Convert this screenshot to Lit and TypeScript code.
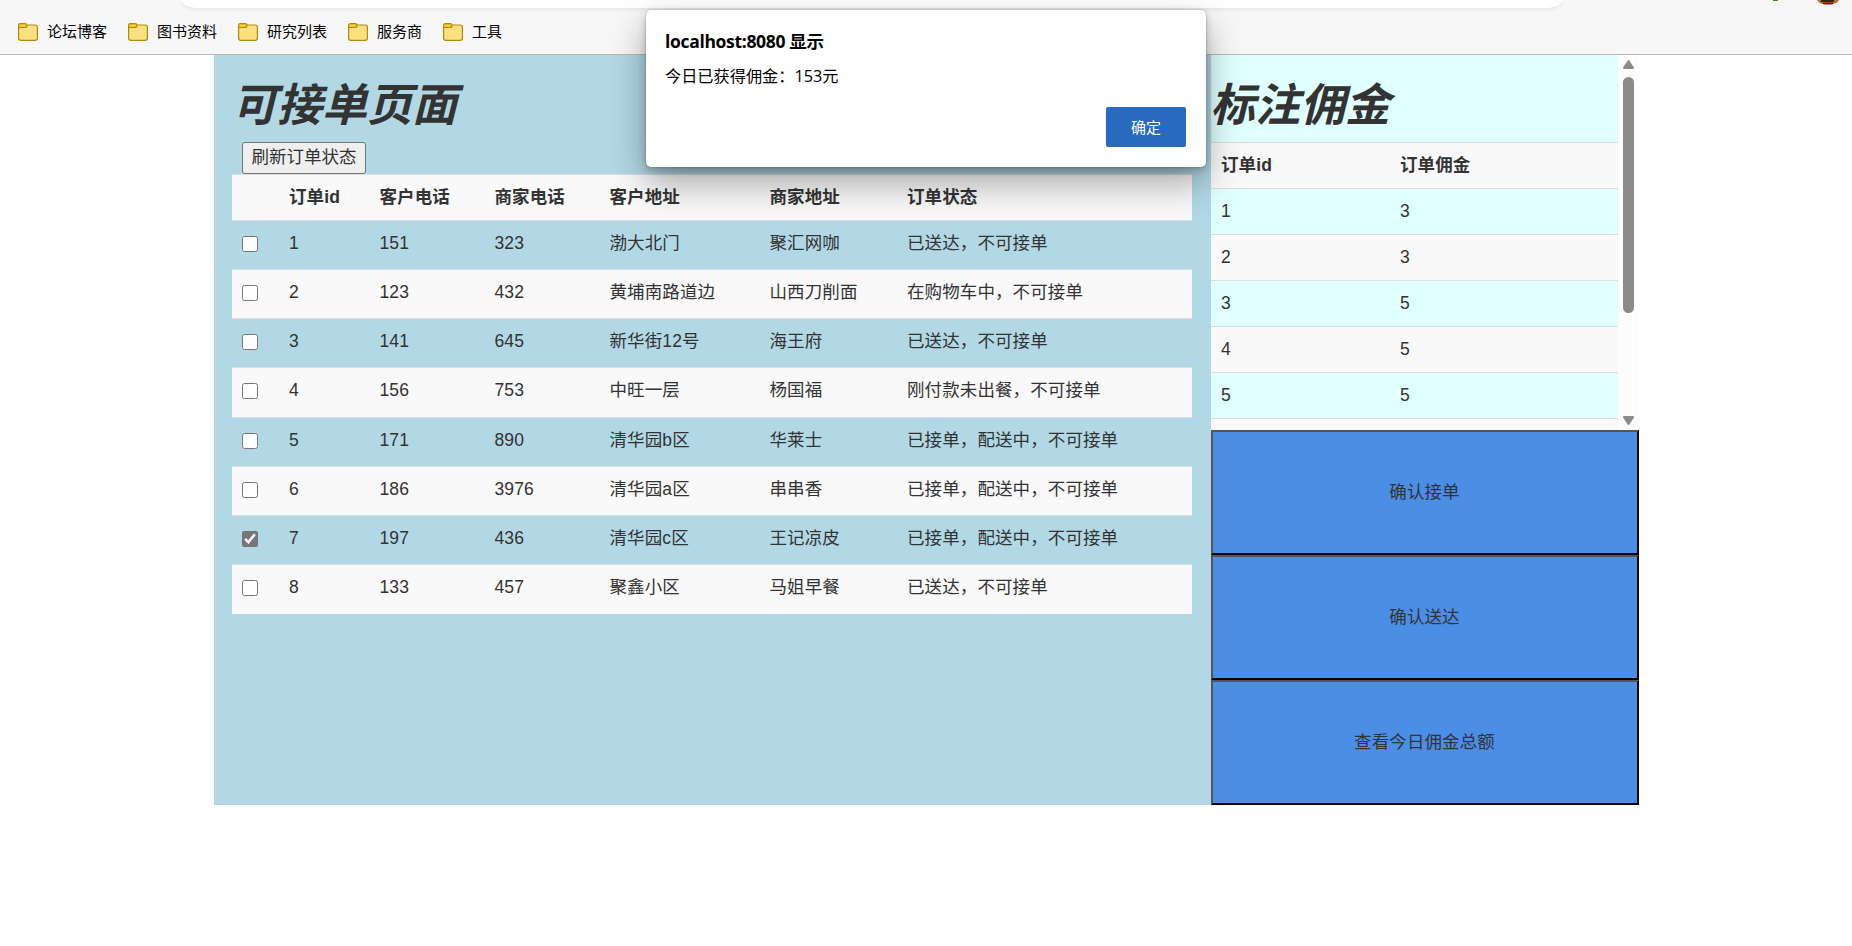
import { LitElement, html, css } from "lit";
import { customElement, property, state } from "lit/decorators.js";

interface Order {
  id: number;
  customer: string;
  shop: string;
  address: string;
  shopAddress: string;
  status: string;
}

const BOOKMARKS = ["论坛博客", "图书资料", "研究列表", "服务商", "工具"];

const ORDERS: Order[] = [
  { id: 1, customer: "151", shop: "323", address: "渤大北门", shopAddress: "聚汇网咖", status: "已送达，不可接单" },
  { id: 2, customer: "123", shop: "432", address: "黄埔南路道边", shopAddress: "山西刀削面", status: "在购物车中，不可接单" },
  { id: 3, customer: "141", shop: "645", address: "新华街12号", shopAddress: "海王府", status: "已送达，不可接单" },
  { id: 4, customer: "156", shop: "753", address: "中旺一层", shopAddress: "杨国福", status: "刚付款未出餐，不可接单" },
  { id: 5, customer: "171", shop: "890", address: "清华园b区", shopAddress: "华莱士", status: "已接单，配送中，不可接单" },
  { id: 6, customer: "186", shop: "3976", address: "清华园a区", shopAddress: "串串香", status: "已接单，配送中，不可接单" },
  { id: 7, customer: "197", shop: "436", address: "清华园c区", shopAddress: "王记凉皮", status: "已接单，配送中，不可接单" },
  { id: 8, customer: "133", shop: "457", address: "聚鑫小区", shopAddress: "马姐早餐", status: "已送达，不可接单" },
];

const FEES = [[1, 3], [2, 3], [3, 5], [4, 5], [5, 5]];

@customElement("browser-bar")
class BrowserBar extends LitElement {
  static styles = css`
    :host { display: block; }
    .bar {
      height: 54px; background: #f7f7f7; border-bottom: 1px solid #b9b9b9;
      display: flex; flex-direction: column; overflow: hidden;
      font-family: "Noto Sans CJK SC", sans-serif; font-size: 15px; color: #000;
    }
    .top { height: 16px; display: flex; flex: none; align-items: flex-start; }
    .address {
      margin-left: 182px; width: 1380px; height: 8px; background: #fff;
      border-radius: 0 0 16px 16px / 0 0 8px 8px; box-shadow: 0 1px 4px rgba(0,0,0,.09);
    }
    .dot { width: 5px; height: 1px; background: #3f8a1f; margin-left: 211px; }
    .avatar { margin-left: 38px; display: block; }
    .marks { display: flex; gap: 20px; padding-left: 18px; height: 32px; align-items: center; }
    .mark { display: flex; align-items: center; gap: 9px; line-height: 20px; white-space: nowrap; }
    .label { padding: 0 1px 2px 0; }
    .folder { display: block; width: 20px; height: 18px; }
  `;
  render() {
    return html`<div class="bar">
      <div class="top">
        <div class="address"></div>
        <div class="dot"></div>
        <svg class="avatar" width="24" height="6" viewBox="0 0 24 6">
          <path d="M1 0C4 6.300 20 6.300 23 0Z" fill="#b0762f" />
          <path d="M5 0h13v2H5Z" fill="#3a2410" />
          <path d="M7 2.500h10v1.600H7Z" fill="#8c0d0d" />
        </svg>
      </div>
      <div class="marks">
        ${BOOKMARKS.map((name) => html`<div class="mark">
          <svg class="folder" viewBox="0 0 20 18">
            <rect x=".6" y="2" width="18.800" height="15.300" rx="2.300" fill="#fbe07f" stroke="#b08a10" stroke-width="1.200" />
            <path d="M.6 4.400V2.400Q.6.6 2.400.6H7Q9 .6 9 2.200 9 4.500 6.600 4.500Z" fill="#f7cd2e" stroke="#b08a10" stroke-width="1.200" />
          </svg><span class="label">${name}</span>
        </div>`)}
      </div>
    </div>`;
  }
}

@customElement("order-panel")
class OrderPanel extends LitElement {
  @property({ attribute: false }) orders: Order[] = [];
  @property({ type: Number }) selected = 0;
  static styles = css`
    :host { display: block; width: 997px; height: 750px; background: #b2d8e6; }
    .panel { padding: 0 19px 0 18px; }
    .title { margin: 0; padding: 26px 0 0; height: 61px; line-height: 50px; font-size: 45px; font-weight: 700; font-style: italic; }
    .refresh {
      display: block; margin: 0 0 0 10px; width: 124px; height: 32px; padding: 0 0 3px; font: inherit; color: inherit;
      line-height: 26px; background: #efefef; border: 1px solid #767676; border-radius: 3px;
    }
    .grid { width: 960px; border-collapse: separate; border-spacing: 0; table-layout: fixed; letter-spacing: .1px; }
    th, td { padding: 10px 0 0 10px; border-top: 1px solid #ddd; line-height: 25px; text-align: left; vertical-align: top; white-space: nowrap; box-sizing: border-box; }
    th { height: 46px; }
    td { height: 49px; }
    .tall td { height: 50px; }
    .odd { background: #f9f9f9; }
    .c0 { width: 47px; } .c1 { width: 90.5px; } .c2, .c3 { width: 115px; }
    .c4 { width: 160px; } .c5 { width: 137.5px; }
    .check { display: block; width: 16px; height: 16px; margin: 5px 0 0; accent-color: #767676; }
  `;
  render() {
    return html`<div class="panel">
      <h1 class="title">可接单页面</h1>
      <button class="refresh">刷新订单状态</button>
      <table class="grid">
        <tr class="odd">
          <th class="c0"></th><th class="c1">订单id</th><th class="c2">客户电话</th><th class="c3">商家电话</th>
          <th class="c4">客户地址</th><th class="c5">商家地址</th><th>订单状态</th>
        </tr>
        ${this.orders.map((o, i) => html`<tr class="${i % 2 ? "odd" : "even"} ${i % 4 === 3 ? "tall" : ""}">
          <td><input class="check" type="checkbox" .checked=${o.id === this.selected} /></td>
          <td>${o.id}</td><td>${o.customer}</td><td>${o.shop}</td>
          <td>${o.address}</td><td>${o.shopAddress}</td><td>${o.status}</td>
        </tr>`)}
      </table>
    </div>`;
  }
}

@customElement("fee-panel")
class FeePanel extends LitElement {
  @property({ attribute: false }) fees: number[][] = [];
  static styles = css`
    :host { display: block; width: 428px; }
    .list { display: flex; height: 375px; overflow: hidden; }
    .content { width: 407px; background: #e0ffff; }
    .title { margin: 0; padding: 26px 0 0; height: 61px; line-height: 50px; font-size: 45px; font-weight: 700; font-style: italic; }
    .name { margin-left: -1px; }
    .row { display: grid; grid-template-columns: 179px 1fr; height: 25px; line-height: 25px; padding: 10px; border-top: 1px solid #ddd; }
    .odd { background: #f9f9f9; }
    .head { font-weight: 700; letter-spacing: .1px; }
    .scroll { width: 21px; background: #fcfcfc; display: flex; flex-direction: column; align-items: center; padding: 5px 0; box-sizing: border-box; }
    .arrow { display: block; width: 11px; height: 9px; flex: none; }
    .thumb { width: 11px; height: 236px; margin-top: 8px; margin-bottom: auto; border-radius: 6px; background: #8b8b8b; }
    .action {
      display: block; width: 428px; height: 125px; box-sizing: border-box; font: inherit; color: inherit; letter-spacing: .1px;
      padding: 0 1px 1px 0; background: #4b8ee6; border: 2px solid; border-color: #555 #000 #000 #555; border-radius: 0;
    }
  `;
  render() {
    return html`<div class="list">
        <div class="content">
          <h1 class="title"><span class="name">标注佣金</span></h1>
          <div class="row odd head"><span>订单id</span><span>订单佣金</span></div>
          ${this.fees.map(([id, fee], i) => html`<div class="row ${i % 2 ? "odd" : ""}"><span>${id}</span><span>${fee}</span></div>`)}
          <div class="row odd"></div>
        </div>
        <div class="scroll">
          <svg class="arrow" viewBox="0 0 11 9"><path d="M4.700.6Q5.500-.4 6.300.6L11 7.600Q11 9 10 9H1Q0 9 0 7.600Z" fill="#8b8b8b" /></svg>
          <div class="thumb"></div>
          <svg class="arrow" viewBox="0 0 11 9"><path d="M4.700 8.400Q5.500 9.400 6.300 8.400L11 1.400Q11 0 10 0H1Q0 0 0 1.400Z" fill="#8b8b8b" /></svg>
        </div>
      </div>
      <button class="action">确认接单</button>
      <button class="action">确认送达</button>
      <button class="action">查看今日佣金总额</button>`;
  }
}

@customElement("alert-dialog")
class AlertDialog extends LitElement {
  @property() message = "";
  static styles = css`
    :host { position: absolute; left: 646px; top: 10px; display: block; }
    .box {
      width: 560px; height: 157px; box-sizing: border-box; padding: 18px 20px 20px; display: flex; flex-direction: column;
      background: #fff; border-radius: 5px; color: #000;
      box-shadow: 0 0 2px rgba(0,0,0,.3), 0 16px 36px rgba(0,0,0,.34), 0 3px 9px rgba(0,0,0,.2);
      font-family: "Open Sans", "Noto Sans CJK SC", sans-serif;
    }
    .title { margin-left: -1px; font-size: 17.5px; font-weight: 700; line-height: 26px; letter-spacing: -.33px; white-space: nowrap; }
    .text { margin: 10px 0 0 -1px; font-size: 16.2px; line-height: 24px; white-space: nowrap; }
    .ok { margin: auto 0 0 auto; width: 80px; height: 40px; padding: 0 0 1px; border: 0; border-radius: 2px; background: #286abf; color: #fff; font: 15px "Noto Sans CJK SC", sans-serif; }
  `;
  render() {
    return html`<div class="box" role="alertdialog">
      <div class="title">localhost:8080 显示</div>
      <div class="text">${this.message}</div>
      <button class="ok">确定</button>
    </div>`;
  }
}

@customElement("app-root")
class AppRoot extends LitElement {
  @state() private selected = 7;
  static styles = css`
    :host {
      display: block; position: relative; height: 946px; overflow: hidden; background: #fff; color: #333;
      font-family: "Liberation Sans", "Noto Sans CJK SC", sans-serif; font-size: 17.5px; line-height: 25px;
    }
    .page { display: flex; width: 1425px; margin-left: 214px; }
  `;
  render() {
    return html`<browser-bar></browser-bar>
      <main class="page">
        <order-panel .orders=${ORDERS} .selected=${this.selected}></order-panel>
        <fee-panel .fees=${FEES}></fee-panel>
      </main>
      <alert-dialog message="今日已获得佣金：153元"></alert-dialog>`;
  }
}
